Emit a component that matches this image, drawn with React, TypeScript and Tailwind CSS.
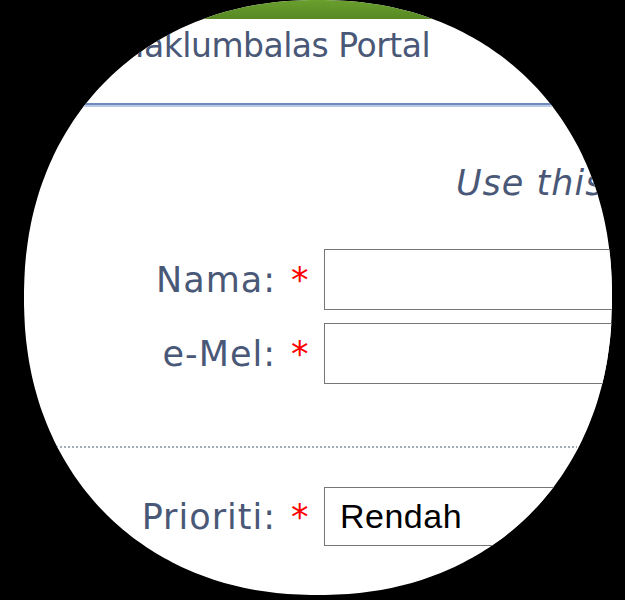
// lens outline: a slightly squared circle (superellipse) around the zoomed page
const lensPath = (() => {
  const cx = 318, cy = 297.5, a = 294, b = 297.5, n = 2.15;
  const pts: string[] = [];
  for (let i = 0; i < 360; i++) {
    const t = (i / 360) * Math.PI * 2;
    const c = Math.cos(t), s = Math.sin(t);
    const x = cx + a * Math.sign(c) * Math.pow(Math.abs(c), 2 / n);
    const y = cy + b * Math.sign(s) * Math.pow(Math.abs(s), 2 / n);
    pts.push(`${x.toFixed(1)} ${y.toFixed(1)}`);
  }
  return `path('M ${pts.join(" L ")} Z')`;
})();

export default function App() {
  const label = "w-[276px] shrink-0 text-right text-[35px] leading-[40px] tracking-[1px] text-[#4a5877]";
  const star = "w-[48px] shrink-0 pl-[15px] text-[35px] leading-[40px] text-[#ff0000]";

  return (
    <div className="w-[625px] h-[600px] bg-black overflow-hidden font-['DejaVu_Sans',sans-serif]">
      {/* Magnifier lens */}
      <div className="w-[625px] h-[600px] bg-white overflow-hidden flex flex-col" style={{ clipPath: lensPath }}>
        {/* Header strip */}
        <div className="h-[19px] shrink-0 bg-gradient-to-b from-[#6aa02e] to-[#578824]" />

        <h1 className="mt-[7px] pl-[116px] text-[33px] leading-[40px] tracking-[-0.5px] text-[#4a5877] whitespace-nowrap">
          Maklumbalas Portal
        </h1>

        <div className="mt-[37px] h-[2px] shrink-0 bg-[#6f8bbd]" />
        <div className="h-[2px] shrink-0 bg-[#b9c9e6]" />

        <p className="mt-[56px] pl-[456px] text-[35px] leading-[40px] tracking-[1px] italic text-[#4a5877] whitespace-nowrap overflow-hidden">
          Use this form
        </p>

        {/* Contact fields */}
        <div className="mt-[46px] flex items-center h-[61px] shrink-0">
          <span className={label}>Nama:</span>
          <span className={star}>*</span>
          <input className="w-[301px] h-[61px] shrink-0 border border-[#767676] bg-white" />
        </div>
        <div className="mt-[13px] flex items-center h-[61px] shrink-0">
          <span className={label}>e-Mel:</span>
          <span className={star}>*</span>
          <input className="w-[301px] h-[61px] shrink-0 border border-[#767676] bg-white" />
        </div>

        <div className="mt-[62px] mx-[48px] h-[2px] shrink-0 bg-[repeating-linear-gradient(90deg,#a3aebd_0px,#a3aebd_2px,transparent_2px,transparent_4px)]" />

        <div className="mt-[39px] flex items-center h-[59px] shrink-0">
          <span className={label}>Prioriti:</span>
          <span className={star}>*</span>
          <div className="w-[301px] h-[59px] shrink-0 border border-[#767676] bg-white flex items-center pl-[15px] font-['Liberation_Sans',sans-serif] text-[34px] tracking-[0.5px] text-black">
            Rendah
          </div>
        </div>
      </div>
    </div>
  );
}
